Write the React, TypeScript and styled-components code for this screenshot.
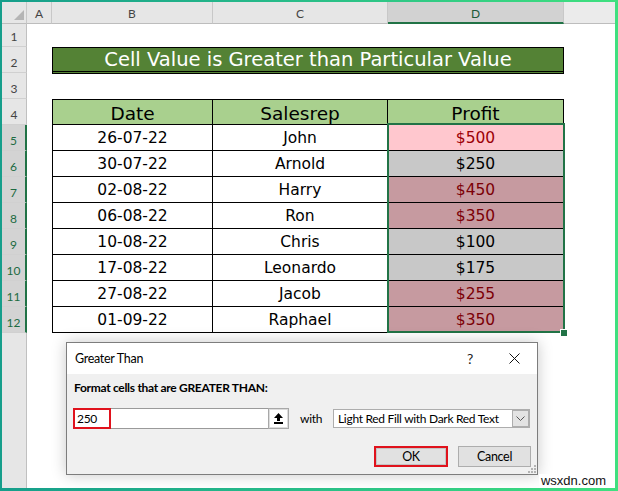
import React from 'react';
import styled, { createGlobalStyle } from 'styled-components';

const SHEET_FONT = `"DejaVu Sans", "Liberation Sans", sans-serif`;
const UI_FONT = `Lato, "Liberation Sans", sans-serif`;
const GREEN = '#217346';

const GlobalStyle = createGlobalStyle`
  html, body { margin: 0; padding: 0; background: #ffffff; }
  #root { width: 618px; height: 491px; }
`;

const Frame = styled.div`
  width: 618px;
  height: 491px;
  box-sizing: border-box;
  padding: 2px 3px 3px 2px;
  background: linear-gradient(90deg, #169e8b 0%, #27bb89 45%, #3fe07f 100%);
`;

const Sheet = styled.div`
  position: relative;
  width: 100%;
  height: 100%;
  overflow: hidden;
  background: #ffffff;
  display: grid;
  grid-template-columns: 25px 25px 161px 175px 176px 1fr;
  grid-template-rows: 22px 23px repeat(11, 26px) 1fr;
`;

const Corner = styled.div`
  position: relative;
  background: #e6e6e6;
  border-right: 1px solid #c8c8c8;
  border-bottom: 1px solid #bdbdbd;
  &::after {
    content: '';
    position: absolute;
    right: 2px;
    bottom: 3px;
    width: 10px;
    height: 10px;
    background: #b5b5b5;
    clip-path: polygon(100% 0, 100% 100%, 0 100%);
  }
`;

const ColHead = styled.div<{ $active?: boolean; $last?: boolean }>`
  display: flex;
  align-items: center;
  justify-content: center;
  padding-top: 2px;
  box-sizing: border-box;
  font: 12px ${UI_FONT};
  color: ${(p) => (p.$active ? '#1d5b38' : '#444444')};
  background: ${(p) => (p.$active ? '#d2d2d2' : p.$last ? '#ebebeb' : '#e6e6e6')};
  border-right: ${(p) => (p.$last ? 'none' : '1px solid #c8c8c8')};
  border-bottom: ${(p) => (p.$active ? `2px solid ${GREEN}` : '1px solid #bdbdbd')};
`;

const RowHead = styled.div<{ $active?: boolean; $filler?: boolean }>`
  grid-column: 1;
  display: flex;
  align-items: flex-end;
  justify-content: center;
  padding-bottom: 3px;
  box-sizing: border-box;
  font: 12px/12px ${UI_FONT};
  color: ${(p) => (p.$active ? '#1d6b42' : '#444444')};
  background: ${(p) => (p.$active ? '#d3d3d3' : '#e6e6e6')};
  border-right: ${(p) => (p.$active ? `2px solid ${GREEN}` : '1px solid #c0c0c0')};
  border-bottom: ${(p) => (p.$filler ? 'none' : '1px solid #d0d0d0')};
`;

const Title = styled.div`
  grid-column: 3 / span 3;
  height: 27px;
  box-sizing: border-box;
  background: #548235;
  border: 1px solid #000;
  border-bottom: 3px double #000;
  color: #ffffff;
  font: 19.5px ${SHEET_FONT};
  display: flex;
  align-items: center;
  justify-content: center;
`;

const HeadCell = styled.div<{ $first?: boolean }>`
  grid-column: ${(p) => (p.$first ? '3' : 'auto')};
  display: flex;
  align-items: center;
  justify-content: center;
  padding-top: 2px;
  box-sizing: border-box;
  background: #a9d08e;
  border-top: 1px solid #000;
  border-right: 1px solid #000;
  border-bottom: 1px solid #000;
  border-left: ${(p) => (p.$first ? '1px solid #000' : 'none')};
  font: 18.5px ${SHEET_FONT};
  color: #000;
`;

const DataCell = styled.div<{ $first?: boolean }>`
  grid-column: ${(p) => (p.$first ? '3' : 'auto')};
  display: flex;
  align-items: center;
  justify-content: center;
  padding-top: 1px;
  box-sizing: border-box;
  border-right: 1px solid #000;
  border-bottom: 1px solid #000;
  border-left: ${(p) => (p.$first ? '1px solid #000' : 'none')};
  font: 15.5px ${SHEET_FONT};
  color: #000;
`;

const Range = styled.div`
  grid-column: 5;
  grid-row: 6 / span 8;
  position: relative;
  display: flex;
  flex-direction: column;
  &::after {
    content: '';
    position: absolute;
    top: -2px;
    left: -1px;
    right: -1px;
    bottom: 0;
    border: 2px solid ${GREEN};
    pointer-events: none;
  }
`;

type Tone = 'active' | 'hit' | 'miss';

const toneBg: Record<Tone, string> = { active: '#ffc7ce', hit: '#c69aa0', miss: '#c8c8c8' };
const toneFg: Record<Tone, string> = { active: '#9c0006', hit: '#7c0006', miss: '#000000' };

const ProfitCell = styled.div<{ $tone: Tone }>`
  height: 26px;
  flex: none;
  display: flex;
  align-items: center;
  justify-content: center;
  padding-top: 1px;
  box-sizing: border-box;
  border-right: 1px solid #000;
  border-bottom: 1px solid #000;
  background: ${(p) => toneBg[p.$tone]};
  color: ${(p) => toneFg[p.$tone]};
  font: 15.5px ${SHEET_FONT};
`;

const FillHandle = styled.span`
  position: absolute;
  right: -3px;
  bottom: -3px;
  width: 6px;
  height: 6px;
  background: ${GREEN};
  box-shadow: 0 0 0 1px #ffffff;
  z-index: 2;
`;

const Dialog = styled.div`
  position: absolute;
  left: 64px;
  top: 340px;
  width: 472px;
  height: 133px;
  box-sizing: border-box;
  border: 1px solid #7d7d7d;
  background: #f0f0f0;
  box-shadow: 0 0 14px rgba(0, 0, 0, 0.22);
  display: flex;
  flex-direction: column;
  font: 12px ${UI_FONT};
  letter-spacing: -0.3px;
  color: #000;
`;

const TitleBar = styled.div`
  height: 31px;
  flex: none;
  background: #ffffff;
  display: flex;
  align-items: center;
  padding-left: 8px;
`;

const DialogTitle = styled.span`
  flex: 1;
  font-size: 12.5px;
`;

const HelpButton = styled.span`
  width: 30px;
  text-align: center;
  font-size: 14px;
  color: #222;
`;

const CloseButton = styled.span`
  width: 46px;
  margin-left: 6px;
  display: flex;
  align-items: center;
  justify-content: center;
`;

const DialogBody = styled.div`
  flex: 1;
  display: flex;
  flex-direction: column;
  padding: 6px 6px 0 6px;
`;

const Prompt = styled.div`
  height: 16px;
  line-height: 16px;
  margin-left: 1px;
  font-weight: 700;
`;

const InputRow = styled.div`
  margin-top: 12px;
  height: 21px;
  display: flex;
  align-items: center;
`;

const ValueField = styled.div`
  width: 195px;
  height: 21px;
  box-sizing: border-box;
  border: 1px solid #9a9a9a;
  border-right: none;
  background: #ffffff;
  display: flex;
`;

const ValueMark = styled.span`
  width: 38px;
  margin: -1px 0 -1px -1px;
  box-sizing: border-box;
  border: 2px solid #e0121c;
  padding-left: 2px;
  display: flex;
  align-items: center;
`;

const RangeButton = styled.div`
  width: 21px;
  height: 21px;
  box-sizing: border-box;
  border: 1px solid #a8a8a8;
  background: #ffffff;
  box-shadow: inset 0 0 0 1px #dcdcdc;
  display: flex;
  align-items: center;
  justify-content: center;
`;

const WithLabel = styled.span`
  width: 44px;
  box-sizing: border-box;
  padding-left: 11px;
`;

const FormatSelect = styled.div`
  width: 197px;
  height: 19px;
  box-sizing: border-box;
  border: 1px solid #adadad;
  background: #ffffff;
  display: flex;
  align-items: center;
  padding-left: 4px;
`;

const SelectText = styled.span`
  flex: 1;
  white-space: nowrap;
`;

const SelectArrow = styled.span`
  width: 17px;
  height: 17px;
  flex: none;
  box-sizing: border-box;
  border: 1px solid #adadad;
  background: #e3e3e3;
  display: flex;
  align-items: center;
  justify-content: center;
`;

const ButtonRow = styled.div`
  margin-top: 17px;
  height: 21px;
  display: flex;
  justify-content: flex-end;
  gap: 10px;
`;

const DialogButton = styled.div<{ $marked?: boolean }>`
  width: ${(p) => (p.$marked ? '74px' : '73px')};
  height: 21px;
  box-sizing: border-box;
  background: #e1e1e1;
  border: ${(p) => (p.$marked ? '2px solid #e0121c' : '1px solid #adadad')};
  box-shadow: ${(p) => (p.$marked ? 'inset 0 0 0 1px #c4c4c4' : 'none')};
  display: flex;
  align-items: center;
  justify-content: center;
  font-size: 12.5px;
`;

const Grip = styled.span`
  position: absolute;
  right: 1px;
  bottom: 1px;
  width: 8px;
  height: 8px;
  display: flex;
`;

const Watermark = styled.span`
  position: absolute;
  right: 7px;
  bottom: 0;
  padding: 0 2px;
  background: #ffffff;
  font: 13px/14px "Liberation Sans", Arial, sans-serif;
  color: #111;
`;

const rows: { date: string; rep: string; profit: string; tone: Tone }[] = [
  { date: '26-07-22', rep: 'John', profit: '$500', tone: 'active' },
  { date: '30-07-22', rep: 'Arnold', profit: '$250', tone: 'miss' },
  { date: '02-08-22', rep: 'Harry', profit: '$450', tone: 'hit' },
  { date: '06-08-22', rep: 'Ron', profit: '$350', tone: 'hit' },
  { date: '10-08-22', rep: 'Chris', profit: '$100', tone: 'miss' },
  { date: '17-08-22', rep: 'Leonardo', profit: '$175', tone: 'miss' },
  { date: '27-08-22', rep: 'Jacob', profit: '$255', tone: 'hit' },
  { date: '01-09-22', rep: 'Raphael', profit: '$350', tone: 'hit' },
];

export default function App() {
  return (
    <>
      <GlobalStyle />
      <Frame>
        <Sheet>
          <Corner />
          <ColHead>A</ColHead>
          <ColHead>B</ColHead>
          <ColHead>C</ColHead>
          <ColHead $active>D</ColHead>
          <ColHead $last />

          <RowHead>1</RowHead>
          <RowHead>2</RowHead>
          <Title>Cell Value is Greater than Particular Value</Title>
          <RowHead>3</RowHead>
          <RowHead>4</RowHead>
          <HeadCell $first>Date</HeadCell>
          <HeadCell>Salesrep</HeadCell>
          <HeadCell>Profit</HeadCell>

          {rows.map((r, i) => (
            <React.Fragment key={r.date}>
              <RowHead $active>{i + 5}</RowHead>
              <DataCell $first>{r.date}</DataCell>
              <DataCell>{r.rep}</DataCell>
            </React.Fragment>
          ))}

          <Range>
            {rows.map((r) => (
              <ProfitCell key={r.date} $tone={r.tone}>
                {r.profit}
              </ProfitCell>
            ))}
            <FillHandle />
          </Range>

          <RowHead $filler />

          <Dialog>
            <TitleBar>
              <DialogTitle>Greater Than</DialogTitle>
              <HelpButton>?</HelpButton>
              <CloseButton>
                <svg width="11" height="11" viewBox="0 0 11 11">
                  <path d="M0.5 0.5 L10.5 10.5 M10.5 0.5 L0.5 10.5" stroke="#111" strokeWidth="1" fill="none" />
                </svg>
              </CloseButton>
            </TitleBar>
            <DialogBody>
              <Prompt>Format cells that are GREATER THAN:</Prompt>
              <InputRow>
                <ValueField>
                  <ValueMark>250</ValueMark>
                </ValueField>
                <RangeButton>
                  <svg width="11" height="11" viewBox="0 0 11 11">
                    <path d="M5.5 0 L10 5 H7 V8 H4 V5 H1 Z" fill="#000" />
                    <rect x="1" y="9" width="9" height="2" fill="#000" />
                  </svg>
                </RangeButton>
                <WithLabel>with</WithLabel>
                <FormatSelect>
                  <SelectText>Light Red Fill with Dark Red Text</SelectText>
                  <SelectArrow>
                    <svg width="9" height="5" viewBox="0 0 9 5">
                      <path d="M0.5 0.5 L4.5 4.5 L8.5 0.5" stroke="#555" strokeWidth="1" fill="none" />
                    </svg>
                  </SelectArrow>
                </FormatSelect>
              </InputRow>
              <ButtonRow>
                <DialogButton $marked>OK</DialogButton>
                <DialogButton>Cancel</DialogButton>
              </ButtonRow>
            </DialogBody>
            <Grip>
              <svg width="8" height="8" viewBox="0 0 8 8">
                <rect x="6" y="0" width="2" height="2" fill="#b3b3b3" />
                <rect x="3" y="3" width="2" height="2" fill="#b3b3b3" />
                <rect x="6" y="3" width="2" height="2" fill="#b3b3b3" />
                <rect x="0" y="6" width="2" height="2" fill="#b3b3b3" />
                <rect x="3" y="6" width="2" height="2" fill="#b3b3b3" />
                <rect x="6" y="6" width="2" height="2" fill="#b3b3b3" />
              </svg>
            </Grip>
          </Dialog>

          <Watermark>wsxdn.com</Watermark>
        </Sheet>
      </Frame>
    </>
  );
}
